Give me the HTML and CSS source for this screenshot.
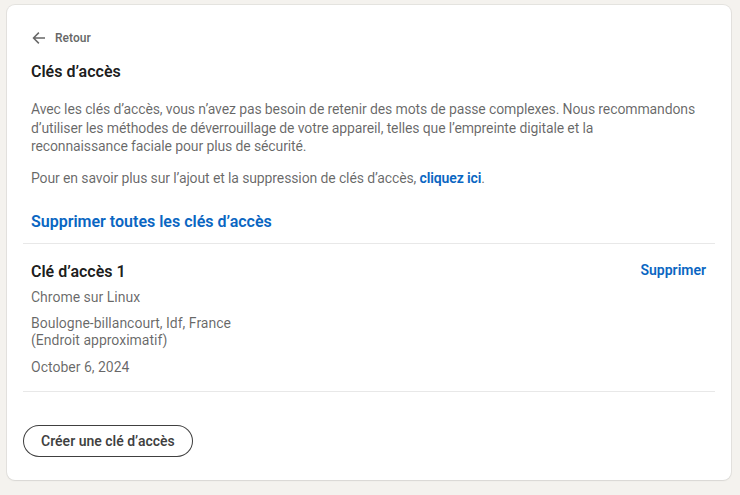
FILE: index.html
```html
<!DOCTYPE html>
<html lang="fr">
<head>
<meta charset="utf-8">
<title>Clés d’accès</title>
<link rel="stylesheet" href="styles.css">
</head>
<body>
<main class="card">
  <section class="intro">
    <a class="back" href="#">
      <svg class="back-icon" width="16" height="16" viewBox="0 0 16 16" aria-hidden="true"><path d="M14 7.25H4.3l4.1-4.1-1.05-1.05L1.45 8l5.9 5.9 1.05-1.05-4.1-4.1H14z" fill="currentColor"/></svg>
      <span>Retour</span>
    </a>
    <h1 class="title">Clés d’accès</h1>
    <p class="text">Avec les clés d’accès, vous n’avez pas besoin de retenir des mots de passe complexes. Nous recommandons d’utiliser les méthodes de déverrouillage de votre appareil, telles que l’empreinte digitale et la<br>reconnaissance faciale pour plus de sécurité.</p>
    <p class="text">Pour en savoir plus sur l’ajout et la suppression de clés d’accès, <a class="link" href="#">cliquez ici</a>.</p>
    <a class="remove-all" href="#">Supprimer toutes les clés d’accès</a>
  </section>
  <section class="key">
    <div class="key-head">
      <h2 class="key-name">Clé d’accès 1</h2>
      <a class="key-remove" href="#">Supprimer</a>
    </div>
    <p class="meta">Chrome sur Linux</p>
    <p class="meta">Boulogne-billancourt, Idf, France<br>(Endroit approximatif)</p>
    <p class="meta">October 6, 2024</p>
  </section>
  <div class="actions">
    <button class="create" type="button">Créer une clé d’accès</button>
  </div>
</main>
</body>
</html>
```
FILE: styles.css
```css
* { box-sizing: border-box; }
html, body { margin: 0; padding: 0; }
body {
  background: #f4f2ee;
  font-family: Roboto, "Noto Sans", sans-serif;
  color: rgba(0,0,0,0.9);
  padding: 5px 9px 15px 7px;
}
.card {
  background: #fff;
  border-radius: 8px;
  box-shadow: 0 0 0 1px rgba(140,140,140,0.15), 0 1px 2px rgba(0,0,0,0.06);
  padding: 21px 16px 23px;
  min-height: 475px;
}
.intro { padding: 0 8px; }
.back {
  display: flex;
  align-items: center;
  gap: 8px;
  color: rgba(0,0,0,0.6);
  text-decoration: none;
  font-size: 12px;
  font-weight: 600;
  height: 24px;
}
.back-icon { color: rgba(0,0,0,0.6); }
.title {
  margin: 10px 0 0;
  font-size: 16px;
  font-weight: 600;
  line-height: 24px;
}
.text {
  margin: 16px 0 0;
  font-size: 14px;
  line-height: 18.5px;
  color: rgba(0,0,0,0.6);
  letter-spacing: -0.12px;
}
.text + .text { margin-top: 13px; }
.link { color: #0a66c2; font-weight: 600; text-decoration: none; }
.remove-all {
  display: block;
  margin-top: 23px;
  color: #0a66c2;
  font-size: 16px;
  font-weight: 600;
  line-height: 24px;
  text-decoration: none;
  padding-bottom: 9px;
}
.key {
  border-top: 1px solid #e8e8e8;
  border-bottom: 1px solid #e8e8e8;
  padding: 16px 8px 15px;
}
.key-head { display: flex; justify-content: space-between; align-items: flex-start; }
.key-name { margin: 0; font-size: 16px; font-weight: 600; line-height: 24px; }
.key-remove {
  color: #0a66c2; font-size: 14px; font-weight: 600; text-decoration: none; line-height: 20px;
  margin-right: 1px;
}
.meta {
  margin: 9px 0 0;
  font-size: 14px;
  line-height: 17px;
  color: rgba(0,0,0,0.6);
}
.key-head + .meta { margin-top: 5px; }
.meta:last-child { margin-top: 10px; }
.actions { padding-top: 33px; }
.create {
  font-family: inherit;
  font-size: 14px;
  font-weight: 600;
  color: rgba(0,0,0,0.75);
  background: #fff;
  border: 1px solid rgba(0,0,0,0.75);
  border-radius: 16px;
  height: 32px;
  padding: 0 17px;
}
```
